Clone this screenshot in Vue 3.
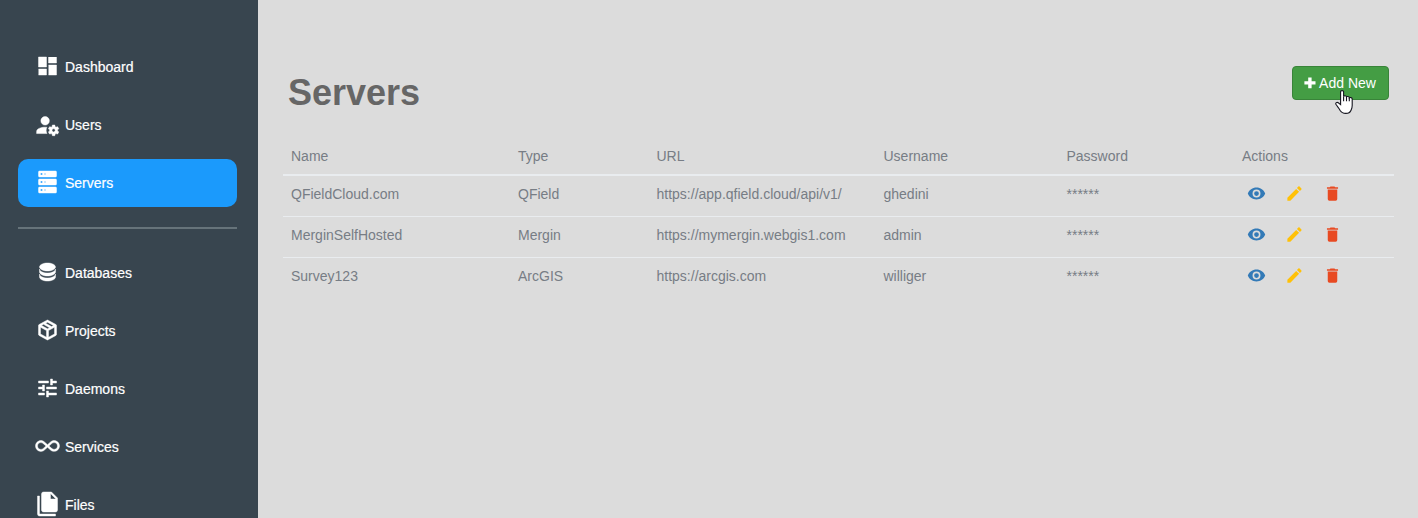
<script setup>
const primary = [
  {
    label: 'Dashboard',
    icon: 'M13,3V9H21V3M13,21H21V11H13M3,21H11V15H3M3,13H11V3H3V13Z',
  },
  {
    label: 'Users',
    icon: 'M10 4A4 4 0 0 0 6 8A4 4 0 0 0 10 12A4 4 0 0 0 14 8A4 4 0 0 0 10 4M17 12C16.87 12 16.76 12.09 16.74 12.21L16.55 13.53C16.25 13.66 15.96 13.82 15.7 14L14.46 13.5C14.35 13.5 14.22 13.5 14.15 13.63L13.15 15.36C13.09 15.47 13.11 15.6 13.21 15.68L14.27 16.5C14.25 16.67 14.24 16.83 14.24 17C14.24 17.17 14.25 17.33 14.27 17.5L13.21 18.32C13.12 18.4 13.09 18.53 13.15 18.64L14.15 20.37C14.21 20.5 14.34 20.5 14.46 20.5L15.7 20C15.96 20.18 16.24 20.35 16.55 20.47L16.74 21.79C16.76 21.91 16.86 22 17 22H19C19.11 22 19.22 21.91 19.24 21.79L19.43 20.47C19.73 20.34 20 20.18 20.27 20L21.5 20.5C21.63 20.5 21.76 20.5 21.83 20.37L22.83 18.64C22.89 18.53 22.86 18.4 22.77 18.32L21.7 17.5C21.72 17.33 21.74 17.17 21.74 17C21.74 16.83 21.73 16.67 21.7 16.5L22.76 15.68C22.85 15.6 22.88 15.47 22.82 15.36L21.82 13.63C21.76 13.5 21.63 13.5 21.5 13.5L20.27 14C20 13.82 19.73 13.65 19.42 13.53L19.23 12.21C19.22 12.09 19.11 12 19 12H17M10 14C5.58 14 2 15.79 2 18V20H11.68A7 7 0 0 1 11 17A7 7 0 0 1 11.64 14.09C11.11 14.03 10.56 14 10 14M18 15.5C18.83 15.5 19.5 16.17 19.5 17C19.5 17.83 18.83 18.5 18 18.5C17.16 18.5 16.5 17.83 16.5 17C16.5 16.17 17.17 15.5 18 15.5Z',
    box: '0.95 -0.3 22.6 22.6',
  },
  {
    label: 'Servers',
    active: true,
    icon: 'M4,1H20A1,1 0 0,1 21,2V6A1,1 0 0,1 20,7H4A1,1 0 0,1 3,6V2A1,1 0 0,1 4,1M4,9H20A1,1 0 0,1 21,10V14A1,1 0 0,1 20,15H4A1,1 0 0,1 3,14V10A1,1 0 0,1 4,9M4,17H20A1,1 0 0,1 21,18V22A1,1 0 0,1 20,23H4A1,1 0 0,1 3,22V18A1,1 0 0,1 4,17M9,5H10V3H9V5M9,13H10V11H9V13M9,21H10V19H9V21M5,3V5H7V3H5M5,11V13H7V11H5M5,19V21H7V19H5Z',
  },
]

const secondary = [
  {
    label: 'Databases',
    icon: 'M12,3C7.58,3 4,4.79 4,7C4,9.21 7.58,11 12,11C16.42,11 20,9.21 20,7C20,4.79 16.42,3 12,3M4,9V12C4,14.21 7.58,16 12,16C16.42,16 20,14.21 20,12V9C20,11.21 16.42,13 12,13C7.58,13 4,11.21 4,9M4,14V17C4,19.21 7.58,21 12,21C16.42,21 20,19.21 20,17V14C20,16.21 16.42,18 12,18C7.58,18 4,16.21 4,14Z',
  },
  {
    label: 'Projects',
    icon: 'M21,16.5C21,16.88 20.79,17.21 20.47,17.38L12.57,21.82C12.41,21.94 12.21,22 12,22C11.79,22 11.59,21.94 11.43,21.82L3.53,17.38C3.21,17.21 3,16.88 3,16.5V7.5C3,7.12 3.21,6.79 3.53,6.62L11.43,2.18C11.59,2.06 11.79,2 12,2C12.21,2 12.41,2.06 12.57,2.18L20.47,6.62C20.79,6.79 21,7.12 21,7.5V16.5M12,4.15L10.11,5.22L16,8.61L17.96,7.5L12,4.15M6.04,7.5L12,10.85L13.96,9.75L8.08,6.35L6.04,7.5M5,15.91L11,19.29V12.58L5,9.21V15.91M19,15.91V9.21L13,12.58V19.29L19,15.91Z',
  },
  {
    label: 'Daemons',
    icon: 'M3,17V19H9V17H3M3,5V7H13V5H3M13,21V19H21V17H13V15H11V21H13M7,9V11H3V13H7V15H9V9H7M21,13V11H11V13H21M15,9H17V7H21V5H17V3H15V9Z',
  },
  {
    label: 'Services',
    icon: 'M18.6,6.62C21.58,6.62 24,9 24,12C24,14.96 21.58,17.37 18.6,17.37C17.15,17.37 15.8,16.81 14.78,15.8L12,13.34L9.17,15.85C8.2,16.82 6.84,17.38 5.4,17.38C2.42,17.38 0,14.96 0,12C0,9.04 2.42,6.62 5.4,6.62C6.84,6.62 8.2,7.18 9.22,8.2L12,10.66L14.83,8.15C15.8,7.18 17.16,6.62 18.6,6.62M7.8,14.39L10.5,12L7.84,9.65C7.16,8.97 6.31,8.62 5.4,8.62C3.53,8.62 2,10.13 2,12C2,13.87 3.53,15.38 5.4,15.38C6.31,15.38 7.16,15.03 7.8,14.39M16.2,9.61L13.5,12L16.16,14.35C16.84,15.03 17.7,15.38 18.6,15.38C20.47,15.38 22,13.87 22,12C22,10.13 20.47,8.62 18.6,8.62C17.69,8.62 16.84,8.97 16.2,9.61Z',
  },
  {
    label: 'Files',
    icon: 'M15,7H20.5L15,1.5V7M8,0H16L22,6V18A2,2 0 0,1 20,20H8C6.89,20 6,19.1 6,18V2A2,2 0 0,1 8,0M4,4V22H20V24H4A2,2 0 0,1 2,22V4H4Z',
  },
]

const groups = [primary, secondary]

const columns = ['Name', 'Type', 'URL', 'Username', 'Password', 'Actions']

const servers = [
  { name: 'QFieldCloud.com', type: 'QField', url: 'https://app.qfield.cloud/api/v1/', user: 'ghedini' },
  { name: 'MerginSelfHosted', type: 'Mergin', url: 'https://mymergin.webgis1.com', user: 'admin' },
  { name: 'Survey123', type: 'ArcGIS', url: 'https://arcgis.com', user: 'williger' },
]

const actions = [
  {
    kind: 'view',
    icon: 'M12,9A3,3 0 0,0 9,12A3,3 0 0,0 12,15A3,3 0 0,0 15,12A3,3 0 0,0 12,9M12,17A5,5 0 0,1 7,12A5,5 0 0,1 12,7A5,5 0 0,1 17,12A5,5 0 0,1 12,17M12,4.5C7,4.5 2.73,7.61 1,12C2.73,16.39 7,19.5 12,19.5C17,19.5 21.27,16.39 23,12C21.27,7.61 17,4.5 12,4.5Z',
  },
  {
    kind: 'edit',
    icon: 'M20.71,7.04C21.1,6.65 21.1,6 20.71,5.63L18.37,3.29C18,2.9 17.35,2.9 16.96,3.29L15.12,5.12L18.87,8.87M3,17.25V21H6.75L17.81,9.93L14.06,6.18L3,17.25Z',
  },
  {
    kind: 'delete',
    icon: 'M19,4H15.5L14.5,3H9.5L8.5,4H5V6H19M6,19A2,2 0 0,0 8,21H16A2,2 0 0,0 18,19V7H6V19Z',
  },
]
</script>

<template>
  <div class="app">
    <nav class="sidebar">
      <ul v-for="(group, g) in groups" :key="g" class="group">
        <li v-for="item in group" :key="item.label" class="item" :class="{ active: item.active }">
          <svg class="nav-icon" :viewBox="item.box || '0 0 24 24'"><path :d="item.icon" /></svg>
          <span>{{ item.label }}</span>
        </li>
      </ul>
    </nav>

    <main class="content">
      <header class="heading">
        <h1>Servers</h1>
        <button class="add" type="button">
          <svg class="plus" viewBox="0 0 12 12"><path d="M4.2 .5h3.4v3.7h3.9v3.4H7.6v3.7H4.2V7.6H.4V4.2h3.8z" /></svg>
          <span>Add New</span>
          <svg class="pointer" viewBox="0 0 18 24">
            <path
              d="M5.6 1.6C5.6.3 8.6.3 8.6 1.6V6.6C8.9 5.4 11.4 5.6 11.5 7C12 6.1 14.2 6.3 14.3 7.8C15 7.2 17.2 7.5 17.2 9.1V15.5C17.2 18 16.4 19.2 15.9 20.5C15 22.8 13 23.4 10.8 23.4C8 23.4 6.3 22.4 5 20.2C3.8 18 2 16.2 .9 14.3C.3 12.7 2 11.9 3.3 12.8L5.6 14.6Z"
            />
            <path class="fingers" d="M8.6 6.6V11.2M11.5 7V11.2M14.3 7.8V11.2" />
          </svg>
        </button>
      </header>

      <table>
        <colgroup>
          <col v-for="c in columns" :key="c" :class="'col-' + c.toLowerCase()" />
        </colgroup>
        <thead>
          <tr>
            <th v-for="c in columns" :key="c">{{ c }}</th>
          </tr>
        </thead>
        <tbody>
          <tr v-for="s in servers" :key="s.name">
            <td>{{ s.name }}</td>
            <td>{{ s.type }}</td>
            <td>{{ s.url }}</td>
            <td>{{ s.user }}</td>
            <td>******</td>
            <td class="action-cell">
              <div class="actions">
                <svg v-for="a in actions" :key="a.kind" :class="a.kind" viewBox="0 0 24 24">
                  <path :d="a.icon" />
                </svg>
              </div>
            </td>
          </tr>
        </tbody>
      </table>
    </main>
  </div>
</template>

<style>
body {
  margin: 0;
  overflow: hidden;
}
</style>

<style scoped>
.app {
  display: flex;
  height: 518px;
  overflow: hidden;
  background: #dcdcdc;
  font-family: "Liberation Sans", Arial, sans-serif;
  font-size: 14px;
}
.sidebar {
  box-sizing: border-box;
  flex: none;
  width: 258px;
  padding: 43px 21px 0 18px;
  background: #38454f;
}
.group {
  display: flex;
  flex-direction: column;
  gap: 10px;
  margin: 0;
  padding: 0;
  list-style: none;
}
.group + .group {
  margin-top: 20px;
  padding-top: 20px;
  border-top: 2px solid #66737a;
}
.item {
  display: flex;
  flex: none;
  align-items: center;
  gap: 5px;
  box-sizing: border-box;
  height: 48px;
  padding-left: 17px;
  border-radius: 10px;
  color: #fff;
  -webkit-text-stroke: 0.2px #fff;
}
.item.active {
  background: #1b9afc;
}
.nav-icon {
  width: 25px;
  height: 24px;
  margin-top: -2px;
  overflow: visible;
  fill: #fff;
  stroke: #fff;
  stroke-width: 0.45;
}
.content {
  flex: 1;
  padding: 66px 24px 0 25px;
}
.heading {
  display: flex;
  align-items: flex-start;
  justify-content: space-between;
  height: 73px;
  padding: 0 5px;
}
h1 {
  margin: 7px 0 0;
  color: #666;
  font-size: 36px;
  line-height: 40px;
}
.add {
  position: relative;
  display: flex;
  align-items: center;
  justify-content: center;
  gap: 3px;
  box-sizing: border-box;
  width: 97px;
  height: 34px;
  padding: 0;
  border: 1px solid #398439;
  border-radius: 4px;
  background: #449d44;
  color: #fff;
  font: inherit;
}
.plus {
  width: 12px;
  height: 12px;
  margin-left: -1px;
  fill: #fff;
}
.pointer {
  position: absolute;
  top: 23px;
  left: 42px;
  width: 18px;
  height: 24px;
  fill: #fff;
  stroke: #15151f;
  stroke-width: 1.1;
}
.fingers {
  fill: none;
}
table {
  width: 1111px;
  border-collapse: separate;
  border-spacing: 0;
  table-layout: fixed;
  color: #777d85;
}
.col-name,
.col-url {
  width: 227px;
}
.col-type {
  width: 138.5px;
}
.col-username {
  width: 183px;
}
.col-password {
  width: 175.5px;
}
th,
td {
  box-sizing: border-box;
  padding: 0 8px;
  text-align: left;
  font-weight: normal;
}
th {
  height: 37px;
  padding-bottom: 1px;
  border-bottom: 2px solid #e9ecef;
}
td {
  height: 41px;
  padding-bottom: 4px;
  border-bottom: 1px solid #e9ecef;
}
.action-cell {
  padding-bottom: 6px;
}
tbody tr:last-child td {
  border-bottom-color: transparent;
}
.actions {
  display: flex;
  gap: 19px;
  padding-left: 5px;
}
.actions svg {
  width: 19px;
  height: 19px;
}
.view {
  fill: #337ab7;
}
.edit {
  fill: #ffc107;
}
.delete {
  fill: #e84a22;
}
</style>
